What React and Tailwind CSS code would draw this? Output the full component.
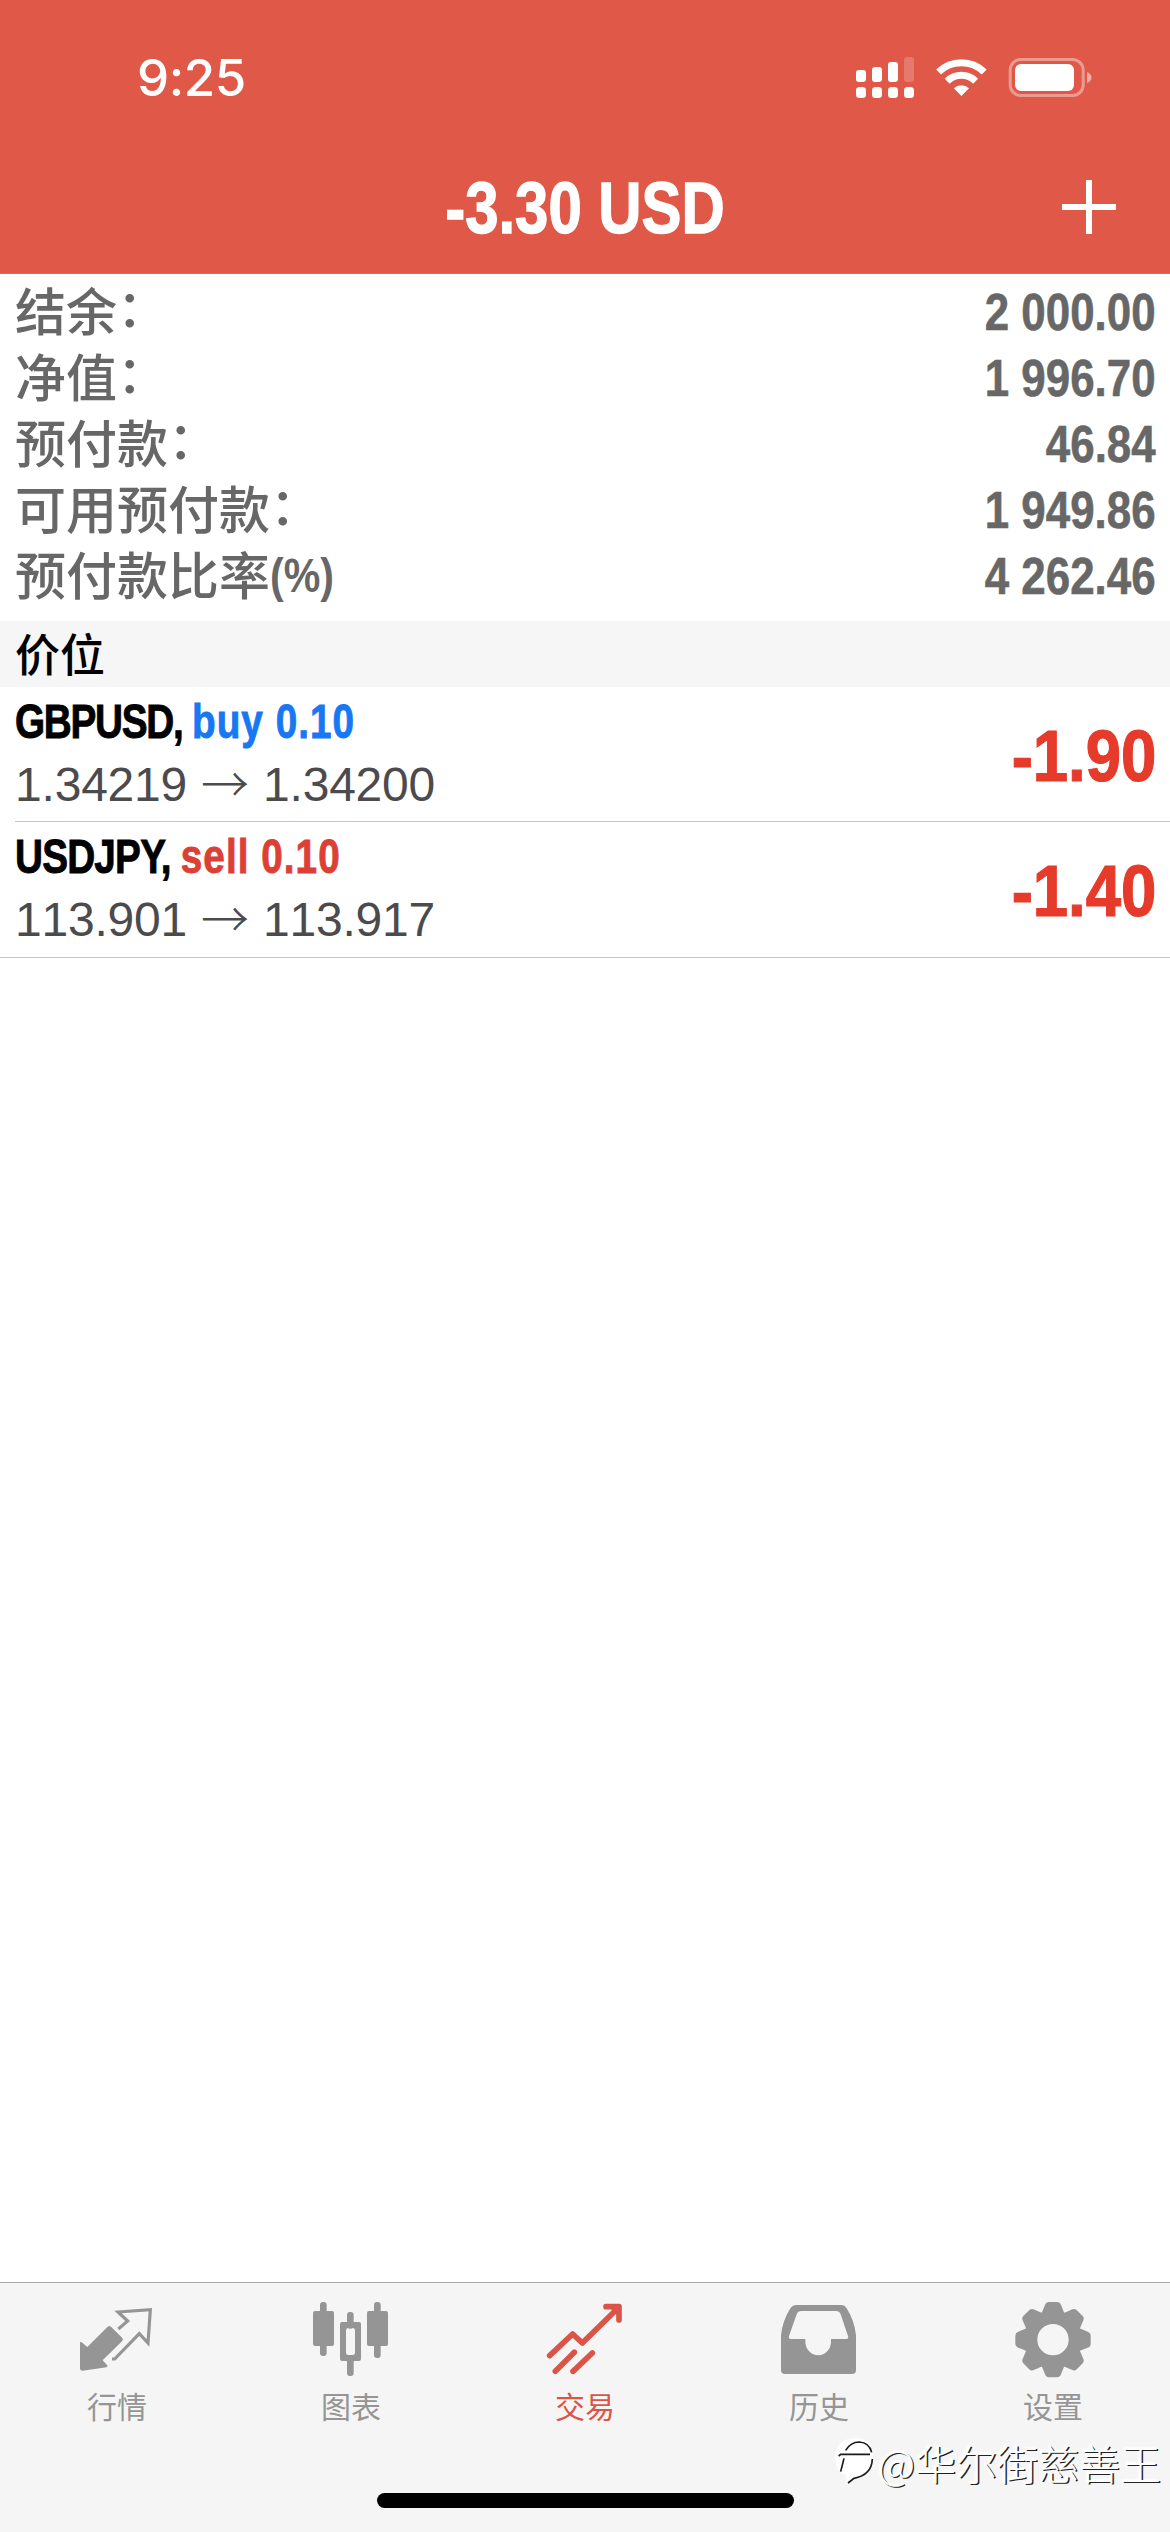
const SANS = "font-['Liberation_Sans','Noto_Sans_CJK_SC',sans-serif]";

const summary = [
  ['结余', '：', '2 000.00'],
  ['净值', '：', '1 996.70'],
  ['预付款', '：', '46.84'],
  ['可用预付款', '：', '1 949.86'],
  ['预付款比率', '(%)', '4 262.46'],
];

const positions = [
  { symbol: 'GBPUSD', side: 'buy 0.10', sideColor: 'text-[#1877f2]', open: '1.34219', current: '1.34200', profit: '-1.90' },
  { symbol: 'USDJPY', side: 'sell 0.10', sideColor: 'text-[#dc4035]', open: '113.901', current: '113.917', profit: '-1.40' },
];

function StatusIcons() {
  return (
    <svg className="h-[60px] w-[250px] text-white" viewBox="850 48 250 60" fill="currentColor">
      <rect x="856" y="70" width="10" height="12" rx="3" />
      <rect x="872" y="67" width="10" height="15" rx="3" />
      <rect x="888" y="62" width="10" height="20" rx="3" />
      <rect x="904" y="57" width="10" height="25" rx="3" opacity="0.2" />
      <rect x="856" y="87" width="10" height="11" rx="3.5" />
      <rect x="872" y="87" width="10" height="11" rx="3.5" />
      <rect x="888" y="87" width="10" height="11" rx="3.5" />
      <rect x="904" y="87" width="10" height="11" rx="3.5" />
      <g fill="none" stroke="currentColor" strokeWidth="7">
        <path d="M938.6 72 A32.5 32.5 0 0 1 984.2 72" />
        <path d="M947.2 81.2 A20 20 0 0 1 975.6 81.2" />
      </g>
      <path d="M961.4 96 L953.8 88.2 A11 11 0 0 1 969 88.2 Z" />
      <rect x="1010.2" y="59.5" width="73" height="36" rx="10.5" fill="none" stroke="currentColor" strokeWidth="3" opacity="0.4" />
      <rect x="1015" y="64" width="59" height="27" rx="6" />
      <path d="M1087 72 Q1091.5 74 1091.5 77.5 Q1091.5 81 1087 83 Z" opacity="0.5" />
    </svg>
  );
}

const icons = {
  quotes: (
    <svg className="size-20" viewBox="111 90 240 240" fill="currentColor">
      <path d="M120 217 L124 216 L142 231 L203 170 Q208 166 213 170 L247 204 Q251 209 246 214 L188 271 L203 287 L200 292 L128 302 Q120 302 120 296 Z" />
      <path d="M235 177 L263 153 L234 126 L331 119 L324 219 L298 191 L224 267 H216" fill="none" stroke="currentColor" strokeWidth="9.5" />
    </svg>
  ),
  charts: (
    <svg className="size-20" viewBox="813 90 240 240" fill="currentColor">
      <rect x="840" y="96" width="20" height="162" rx="9" />
      <rect x="819" y="123" width="63" height="105" rx="6" />
      <rect x="1002" y="96" width="20" height="168" rx="9" />
      <rect x="981" y="123" width="63" height="105" rx="6" />
      <rect x="921" y="126" width="20" height="50" rx="9" />
      <rect x="921" y="256" width="20" height="62" rx="9" />
      <path fillRule="evenodd" d="M906 156 H957 Q963 156 963 162 V267 Q963 273 957 273 H906 Q900 273 900 267 V162 Q900 156 906 156 Z M925 174 Q918 174 918 181 V248 Q918 255 925 255 H938 Q945 255 945 248 V181 Q945 174 938 174 Z" />
    </svg>
  ),
  trade: (
    <svg className="size-20" viewBox="135 90 240 240" fill="none" stroke="currentColor" strokeWidth="17" strokeLinecap="round" strokeLinejoin="round">
      <path d="M149 257 L218 192 L247 219 L352 116" />
      <path d="M318 110 H357 V150" />
      <path d="M166 304 L223 247" />
      <path d="M219 304 L277 249" />
      <path d="M330 112 H356 V138 Z" fill="currentColor" strokeWidth="4" />
    </svg>
  ),
  history: (
    <svg className="size-20" viewBox="837 90 240 240" fill="currentColor">
      <path fillRule="evenodd" d="M888 105 H1025 Q1034 105 1039 113 Q1064 152 1068 196 V300 Q1068 312 1056 312 H855 Q843 312 843 300 V196 Q847 152 872 113 Q878 105 888 105 Z M904 123 Q894 123 890 133 L867 198 Q865 207 873 207 H916 V215 A38 40 0 0 0 993 215 V207 H1038 Q1047 207 1044 198 L1022 133 Q1018 123 1008 123 Z" />
    </svg>
  ),
  settings: (
    <svg className="size-20" viewBox="-120 -119 240 240" fill="currentColor">
      {[0, 45, 90, 135, 180, 225, 270, 315].map((angle) => (
        <path key={angle} transform={`rotate(${angle})`} d="M-38 -70 Q-32 -84 -28 -94 L-24 -104 Q-21 -113 -12 -113 H12 Q21 -113 24 -104 L28 -94 Q32 -84 38 -70 Z" />
      ))}
      <circle r="67" fill="none" stroke="currentColor" strokeWidth="40" />
    </svg>
  ),
};

const tabs = [
  ['行情', 'quotes'],
  ['图表', 'charts'],
  ['交易', 'trade'],
  ['历史', 'history'],
  ['设置', 'settings'],
];

function Position({ item, last }) {
  return (
    <div className={last ? 'border-b border-[#c4c6c8] pl-[15px]' : 'pl-[15px]'}>
      <div className={last ? 'flex h-[135px] justify-between pr-[14px]' : 'flex h-[135px] justify-between border-b border-[#c4c6c8] pr-[14px]'}>
        <div className="w-[460px] pt-[3px]">
          <div className="h-[62px] origin-left scale-x-[0.79] whitespace-nowrap text-[49px] font-bold leading-[62px] [-webkit-text-stroke:0.9px_currentColor]">
            <span className={last ? 'tracking-[-1px] text-black' : 'tracking-[-1.6px] text-black'}>{item.symbol}, </span>
            <span className={`tracking-[1.3px] ${item.sideColor}`}>{item.side}</span>
          </div>
          <div className="mt-[2px] flex h-[62px] items-center text-[48px] leading-[62px] text-[#4b4b4d] [font-kerning:none]">
            <span className="w-[186px] tracking-[-0.2px]">{item.open}</span>
            <span className="w-[62px] pb-[9px] font-['Noto_Sans_CJK_SC',sans-serif] font-light">→</span>
            <span className="tracking-[-0.2px]">{item.current}</span>
          </div>
        </div>
        <div className="origin-right scale-x-[0.87] pt-[5px] text-[73px] font-bold leading-[128px] text-[#e63a2a] [-webkit-text-stroke:1.2px_currentColor]">{item.profit}</div>
      </div>
    </div>
  );
}

export default function App() {
  return (
    <div className={`relative flex h-[2532px] w-[1170px] flex-col overflow-hidden bg-white ${SANS}`}>
      <header className="h-[274px] shrink-0 border-b border-[#b0786f] bg-[#df5848] text-white">
        <div className="flex h-[138px] items-start justify-between pl-[137px] pr-[70px] pt-12">
          <div className="font-[Inter,sans-serif] text-[51px] font-medium leading-[60px] tracking-[-0.4px]">9:25</div>
          <StatusIcons />
        </div>
        <div className="grid h-[135px] grid-cols-[120px_1fr_120px] items-center">
          <span />
          <h1 className="origin-center scale-x-[0.82] pt-[4px] text-center text-[73px] font-bold leading-[130px] [-webkit-text-stroke:1.4px_currentColor]">-3.30 USD</h1>
          <svg className="ml-3 mt-[2px] size-[54px]" viewBox="0 0 54 54" stroke="currentColor" strokeWidth="6">
            <path d="M0 27 H54 M27 0 V54" />
          </svg>
        </div>
      </header>

      <section className="h-[347px] shrink-0 pl-[15px] pr-[14px] pt-[5px] text-[#676767]">
        {summary.map(([label, mark, value]) => (
          <div key={label} className="flex h-[66px] items-center justify-between">
            <div className="flex h-[66px] items-center pb-[7px] font-['Noto_Sans_CJK_SC',sans-serif] text-[51px] font-medium leading-[66px]">
              <span>{label}</span>
              {mark === '(%)' ? (
                <span className="origin-left scale-x-[0.84] pt-1 font-['Liberation_Sans',sans-serif] text-[49px] font-bold">{mark}</span>
              ) : (
                <span className="pb-[8px]">{mark}</span>
              )}
            </div>
            <span className="origin-right scale-x-[0.86] pt-px text-[51px] font-bold leading-[66px] [-webkit-text-stroke:0.6px_currentColor]">{value}</span>
          </div>
        ))}
      </section>

      <h2 className="h-[66px] shrink-0 bg-[#f6f6f6] pl-[15px] font-['Noto_Sans_CJK_SC',sans-serif] text-[45px] font-medium leading-[64px] text-black">价位</h2>

      <main className="flex-1">
        {positions.map((item, i) => (
          <Position key={item.symbol} item={item} last={i === positions.length - 1} />
        ))}
      </main>

      <nav className="flex h-[250px] shrink-0 flex-col items-center border-t border-[#a8a8a8] bg-[#f5f5f5]">
        <div className="grid w-full grid-cols-5 pt-[17px]">
          {tabs.map(([label, icon]) => (
            <div key={label} className={icon === 'trade' ? 'flex flex-col items-center text-[#da5548]' : 'flex flex-col items-center text-[#959595]'}>
              {icons[icon]}
              <span className="mt-[3px] font-['Noto_Sans_CJK_SC',sans-serif] text-[30px] leading-[44px]">{label}</span>
            </div>
          ))}
        </div>
        <div className="mb-6 mt-auto h-[15px] w-[417px] rounded-full bg-black" />
      </nav>

      <div className="absolute bottom-[43px] right-[9px] flex items-center text-white">
        <svg className="h-[54px] w-[44px]" viewBox="92 520 132 162" fill="none">
          <path d="M96 585 Q98 530 160 528 Q212 535 210 590 Q205 645 150 654 L130 668 L128 640 Q96 630 96 585 Z" fill="currentColor" />
          <g stroke="#1a1a1a" strokeWidth="5">
            <path d="M127 566 Q142 541 168 541 Q198 543 205 572" />
            <path d="M106 583 L112 578 H200" />
            <path d="M122 590 L112 630" />
            <path d="M207 592 Q205 640 152 650 L134 664" />
          </g>
        </svg>
        <span className="font-['Noto_Sans_CJK_SC',sans-serif] text-[41px] font-light leading-[50px] [text-shadow:1.4px_1.4px_0_#222,-1px_-1px_2px_#fff]">@华尔街慈善王</span>
      </div>
    </div>
  );
}
